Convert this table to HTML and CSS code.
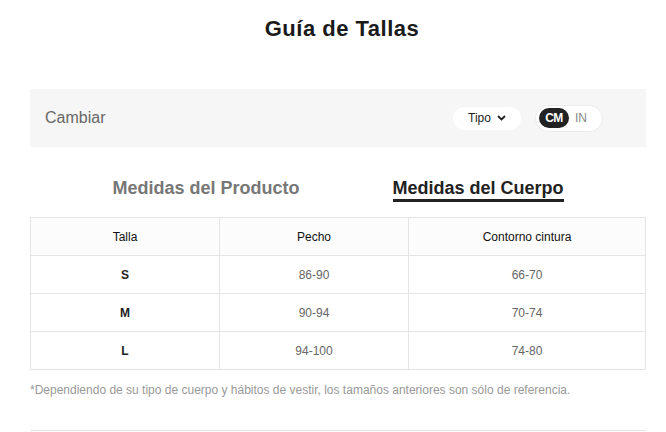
FILE: index.html
```html
<!DOCTYPE html>
<html lang="es">
<head>
<meta charset="utf-8">
<link rel="stylesheet" href="styles.css">
</head>
<body>
<div class="page">
  <h1 class="title">Guía de Tallas</h1>
  <div class="switchbar">
    <span class="switch-label">Cambiar</span>
    <div class="controls">
      <button class="type-pill">Tipo
        <svg class="chev" width="9" height="6" viewBox="0 0 9 6"><path d="M1 1l3.5 3.5L8 1" fill="none" stroke="#222" stroke-width="1.8"/></svg>
      </button>
      <div class="unit-toggle">
        <span class="unit active">CM</span>
        <span class="unit">IN</span>
      </div>
    </div>
  </div>
  <div class="tabs">
    <span class="tab">Medidas del Producto</span>
    <span class="tab active">Medidas del Cuerpo</span>
  </div>
  <table class="sizes">
    <thead>
      <tr><th>Talla</th><th>Pecho</th><th>Contorno cintura</th></tr>
    </thead>
    <tbody>
      <tr><td class="size">S</td><td>86-90</td><td>66-70</td></tr>
      <tr><td class="size">M</td><td>90-94</td><td>70-74</td></tr>
      <tr><td class="size">L</td><td>94-100</td><td>74-80</td></tr>
    </tbody>
  </table>
  <p class="note">*Dependiendo de su tipo de cuerpo y hábitos de vestir, los tamaños anteriores son sólo de referencia.</p>
  <div class="rule"></div>
</div>
</body>
</html>
```

FILE: styles.css
```css
* { box-sizing: border-box; }
html, body { margin: 0; padding: 0; background: #fff; }
body { font-family: "Liberation Sans", Arial, sans-serif; color: #222; }
.page { padding: 0 20px 0 30px; width: 666px; }
.title {
  margin: 0;
  padding-top: 16px;
  height: 89px;
  text-align: center;
  font-size: 22px;
  font-weight: bold;
  color: #1a1a1a;
  padding-left: 8px;
  letter-spacing: 0.5px;
}
.switchbar {
  height: 58px;
  background: #f6f6f6;
  display: flex;
  align-items: center;
  justify-content: space-between;
  padding: 0 43px 0 15px;
}
.switch-label { font-size: 16px; color: #666; }
.controls { display: flex; align-items: center; gap: 14px; }
.type-pill {
  height: 23px;
  width: 68px;
  border: none;
  border-radius: 12px;
  background: #fff;
  font-family: inherit;
  font-size: 12px;
  color: #222;
  display: flex;
  align-items: center;
  justify-content: center;
  gap: 6px;
  padding: 0;
}
.unit-toggle {
  height: 27px;
  width: 68px;
  border-radius: 14px;
  background: #fff;
  border: 1px solid #ececec;
  display: flex;
  align-items: center;
  padding: 0 3px;
  gap: 6px;
}
.unit { font-size: 12px; color: #888; }
.unit.active {
  background: #222;
  color: #fff;
  height: 20px;
  width: 30px;
  border-radius: 10px;
  display: flex;
  align-items: center;
  justify-content: center;
  font-weight: bold;
  letter-spacing: -0.5px;
}
.tabs {
  display: flex;
  justify-content: center;
  gap: 93px;
  height: 70px;
  padding-top: 31px;
}
.tab {
  font-size: 18px;
  font-weight: bold;
  color: #777;
  height: 24px;
}
.tab.active {
  color: #222;
  border-bottom: 3px solid #222;
}
.sizes {
  width: 616px;
  border-collapse: collapse;
  table-layout: fixed;
  font-size: 12px;
}
.sizes th, .sizes td {
  border: 1px solid #e5e5e5;
  height: 38px;
  text-align: center;
  padding: 0;
}
.sizes th { font-weight: normal; color: #111; background: #fcfcfc; }
.sizes th:nth-child(1) { width: 189px; }
.sizes th:nth-child(2) { width: 189px; }
.sizes td { color: #666; }
.sizes td.size { color: #222; font-weight: bold; }
.note {
  margin: 13px 0 0;
  font-size: 12px;
  color: #999;
  height: 47px;
}
.rule { height: 1px; background: #e5e5e5; }
```
